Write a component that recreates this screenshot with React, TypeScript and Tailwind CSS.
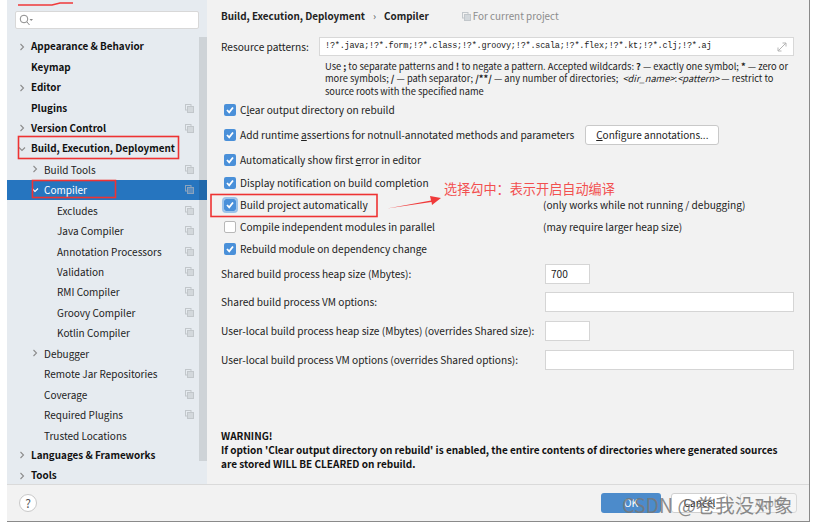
import React from "react";

const F = "font-['Noto_Sans_CJK_SC','Noto_Sans',sans-serif]";

const Copy = ({ dark }: { dark?: boolean }) => (
  <svg width="9" height="9" viewBox="0 0 9 9" className="shrink-0" fill="none" stroke={dark ? "#8aa3bd" : "#c2c7cb"}>
    <rect x="0.5" y="0.5" width="5.5" height="5.5" />
    <rect x="2.5" y="2.5" width="6" height="6" fill={dark ? "#5b8dbf" : "#d3d8dc"} />
  </svg>
);

const Chev = ({ open, light }: { open?: boolean; light?: boolean }) => (
  <svg width="8" height="8" viewBox="0 0 8 8" fill="none" stroke={light ? "#fff" : "#8c8c8c"} strokeWidth="1.1">
    {open ? <path d="M1 2.5 L4 5.5 L7 2.5" /> : <path d="M2.5 1 L5.5 4 L2.5 7" />}
  </svg>
);

type Row = { t: string; lvl: 0 | 1 | 2; arrow?: "r" | "d"; copy?: boolean; sel?: boolean };
const rows: Row[] = [
  { t: "Appearance & Behavior", lvl: 0, arrow: "r" },
  { t: "Keymap", lvl: 0 },
  { t: "Editor", lvl: 0, arrow: "r" },
  { t: "Plugins", lvl: 0, copy: true },
  { t: "Version Control", lvl: 0, arrow: "r", copy: true },
  { t: "Build, Execution, Deployment", lvl: 0, arrow: "d" },
  { t: "Build Tools", lvl: 1, arrow: "r", copy: true },
  { t: "Compiler", lvl: 1, arrow: "d", copy: true, sel: true },
  { t: "Excludes", lvl: 2, copy: true },
  { t: "Java Compiler", lvl: 2, copy: true },
  { t: "Annotation Processors", lvl: 2, copy: true },
  { t: "Validation", lvl: 2, copy: true },
  { t: "RMI Compiler", lvl: 2, copy: true },
  { t: "Groovy Compiler", lvl: 2, copy: true },
  { t: "Kotlin Compiler", lvl: 2, copy: true },
  { t: "Debugger", lvl: 1, arrow: "r" },
  { t: "Remote Jar Repositories", lvl: 1, copy: true },
  { t: "Coverage", lvl: 1, copy: true },
  { t: "Required Plugins", lvl: 1, copy: true },
  { t: "Trusted Locations", lvl: 1 },
  { t: "Languages & Frameworks", lvl: 0, arrow: "r" },
  { t: "Tools", lvl: 0, arrow: "r" },
];

const Check = ({ on, focus }: { on: boolean; focus?: boolean }) => (
  <span
    className={`w-[12px] h-[12px] shrink-0 rounded-[2px] flex items-center justify-center ${
      on ? "bg-[#4a90d9]" : "bg-white border border-[#b8b8b8]"
    } ${focus ? "outline-2 outline-[#9cc3ea]" : ""}`}
  >
    {on && (
      <svg width="10" height="10" viewBox="0 0 10 10" fill="none" stroke="#fff" strokeWidth="1.8">
        <path d="M2 5 L4.2 7.3 L8 2.5" />
      </svg>
    )}
  </span>
);

const CheckRow = ({ on, label, focus, className, labelW, children }: { on: boolean; label: React.ReactNode; focus?: boolean; className: string; labelW?: string; children?: React.ReactNode }) => (
  <div className={`flex items-center ${className}`}>
    <span className="w-[19px] shrink-0 pl-[3px]"><Check on={on} focus={focus} /></span>
    <span className={`whitespace-nowrap ${labelW ?? ""}`}>{label}</span>
    {children}
  </div>
);

const Field = ({ label, w, v, className }: { label: string; w: string; v?: string; className: string }) => (
  <div className={`flex items-center h-[20px] ${className}`}>
    <span className="w-[324px] shrink-0 whitespace-nowrap">{label}</span>
    <span className={`h-[20px] ${w} bg-white border border-[#d5d5d5] pl-[5px] flex items-center`}>{v}</span>
  </div>
);

export default function App() {
  return (
    <div className={`relative w-[816px] h-[524px] bg-white overflow-hidden text-[10.15px] text-[#222] ${F}`}>
      <div className="ml-[7px] w-[803px] h-[522px] flex flex-col bg-[#f2f2f2] border-r border-b border-[#8a8a8a]">
        <div className="flex h-[484px] shrink-0">
          <aside className="relative w-[200px] shrink-0 bg-[#e6ebf0] flex flex-col overflow-hidden text-[10px]">
            <div className="mt-[11px] mx-[8px] h-[18px] shrink-0 bg-white border border-[#d8d8d8] rounded-[2px] flex items-center pl-[3px]">
              <svg width="14" height="12" viewBox="0 0 14 12" fill="none" stroke="#8a8a8a">
                <circle cx="5" cy="5" r="3.8" />
                <path d="M8 8 L10.5 11" />
                <path d="M10.5 5 L14 5 L12.2 7 Z" fill="#8a8a8a" stroke="none" />
              </svg>
            </div>
            <div className="mt-[7.5px] flex flex-col">
              {rows.map((r) => (
                <div
                  key={r.t}
                  className={`h-[20.45px] shrink-0 flex items-center pr-[13px] ${r.sel ? "bg-[#2675bf] text-white" : ""}`}
                >
                  <span className={`shrink-0 flex justify-center ${r.lvl === 0 ? "w-[24px] pl-[6px]" : r.lvl === 1 ? "w-[37px] pl-[19px]" : "w-[50px]"}`}>
                    {r.arrow && <Chev open={r.arrow === "d"} light={r.sel} />}
                  </span>
                  <span className={`flex-1 whitespace-nowrap ${r.lvl === 0 ? "font-bold text-[#111] text-[9.9px]" : ""}`}>{r.t}</span>
                  {r.copy && <Copy dark={r.sel} />}
                </div>
              ))}
            </div>
            <div className="absolute right-0 top-[37px] w-[8px] h-[424px] bg-black/10" />
          </aside>
          <main className="flex-1 min-w-0 pl-[14px] pr-[15px] flex flex-col">
            <div className="mt-[9px] h-[14px] flex items-center whitespace-nowrap">
              <span className="font-bold text-[9.9px]">Build, Execution, Deployment</span>
              <span className="ml-[8px] mr-[8px] text-[#555]">›</span>
              <span className="font-bold text-[9.9px]">Compiler</span>
              <span className="ml-[33px] mr-[2px]"><Copy /></span>
              <span className="text-[#8c8c8c] text-[9.9px]">For current project</span>
            </div>
            <div className="mt-[14px] flex items-center h-[19px]">
              <span className="w-[98px] shrink-0">Resource patterns:</span>
              <div className="flex-1 h-[19px] bg-white border border-[#d8d8d8] flex items-center justify-between pl-[5px] pr-[6px] font-['Liberation_Mono',monospace] text-[8.5px] tracking-[-0.21px] whitespace-nowrap overflow-hidden">
                <span>!?*.java;!?*.form;!?*.class;!?*.groovy;!?*.scala;!?*.flex;!?*.kt;!?*.clj;!?*.aj</span>
                <svg width="10" height="10" viewBox="0 0 10 10" fill="none" stroke="#b5b5b5" className="shrink-0">
                  <path d="M1 9 L9 1 M5.5 1 H9 V4.5 M1 5.5 V9 H4.5" />
                </svg>
              </div>
            </div>
            <div className="mt-[4px] ml-[104px] leading-[12.3px] text-[9.3px] w-[465px]">
              Use <b>;</b> to separate patterns and <b>!</b> to negate a pattern. Accepted wildcards: <b>?</b> — exactly one symbol; <b>*</b> — zero or more symbols; <b>/</b> — path separator; <b>/**/</b> — any number of directories;&nbsp; <i>&lt;dir_name&gt;</i>:<i>&lt;pattern&gt;</i> — restrict to source roots with the specified name
            </div>
            <CheckRow on className="mt-[5px] h-[16px]" label={<>C<u>l</u>ear output directory on rebuild</>} />
            <CheckRow on className="mt-[6px] h-[22px]" label={<>Add runtime <u>a</u>ssertions for notnull-annotated methods and parameters</>}>
              <span className="ml-[11px] w-[134px] h-[20px] bg-white border border-[#c9c9c9] rounded-[3px] flex items-center justify-center text-[10px]"><span><u>C</u>onfigure annotations...</span></span>
            </CheckRow>
            <CheckRow on className="mt-[6px] h-[16px]" label={<>Automatically show first <u>e</u>rror in editor</>} />
            <CheckRow on className="mt-[7px] h-[16px]" label="Display notification on build completion" />
            <CheckRow on focus labelW="w-[303px]" className="mt-[6px] h-[16px]" label="Build project automatically">
              <span className="whitespace-nowrap">(only works while not running / debugging)</span>
            </CheckRow>
            <CheckRow on={false} labelW="w-[303px]" className="mt-[6px] h-[16px]" label="Compile independent modules in parallel">
              <span className="whitespace-nowrap">(may require larger heap size)</span>
            </CheckRow>
            <CheckRow on className="mt-[6px] h-[16px]" label="Rebuild module on dependency change" />
            <Field className="mt-[7px]" label="Shared build process heap size (Mbytes):" w="w-[45px]" v="700" />
            <Field className="mt-[8px]" label="Shared build process VM options:" w="w-[250px]" />
            <Field className="mt-[9px]" label="User-local build process heap size (Mbytes) (overrides Shared size):" w="w-[45px]" />
            <Field className="mt-[9px]" label="User-local build process VM options (overrides Shared options):" w="w-[250px]" />
            <div className="mt-auto mb-[13px] font-bold leading-[14px] text-[10px] text-[#111]">
              WARNING!<br />
              If option 'Clear output directory on rebuild' is enabled, the entire contents of directories where generated sources are stored WILL BE CLEARED on rebuild.
            </div>
          </main>
        </div>
        <footer className="flex-1 border-t border-[#dadada] flex items-center pl-[12px] pr-[12px]">
          <span className="w-[18px] h-[18px] rounded-full bg-white border border-[#c9c9c9] flex items-center justify-center text-[12px] text-[#555]">?</span>
          <span className="ml-auto w-[60px] h-[20px] rounded-[3px] bg-[#4c8bcb] text-white flex items-center justify-center">OK</span>
          <span className="ml-[10px] w-[57px] h-[20px] rounded-[3px] bg-white border border-[#d0d0d0] flex items-center justify-center">Cancel</span>
          <span className="ml-[12px] w-[57px] h-[20px] rounded-[3px] bg-[#f5f5f5] border border-[#d8d8d8] flex items-center justify-center text-[#aaa]">Apply</span>
        </footer>
      </div>

      {/* annotations */}
      <svg className="absolute left-0 top-0 pointer-events-none" width="816" height="524" fill="none">
        <path d="M18 5 H52 L60 3 H73" stroke="#f03a3a" strokeWidth="1.3" />
        <rect x="18.5" y="136.5" width="160" height="22" stroke="#ee3333" strokeWidth="1.6" />
        <rect x="32.5" y="180.5" width="83" height="17" stroke="#ee3333" strokeWidth="1.6" />
        <rect x="211" y="194.5" width="166" height="22" stroke="#ee3333" strokeWidth="1.6" />
        <path d="M387 208.5 L431 200.5 L430 196 L441 198 L432 205 L431.5 202 Z" fill="#f03a3a" />
      </svg>
      <span className="absolute left-[444px] top-[180px] text-[13.15px] leading-[18px] text-[#f25050] whitespace-nowrap">选择勾中：表示开启自动编译</span>
      <span className="absolute left-[622px] top-[492px] text-[19.5px] leading-[26px] text-[#777]/85 whitespace-nowrap">CSDN @卷我没对象</span>
    </div>
  );
}
